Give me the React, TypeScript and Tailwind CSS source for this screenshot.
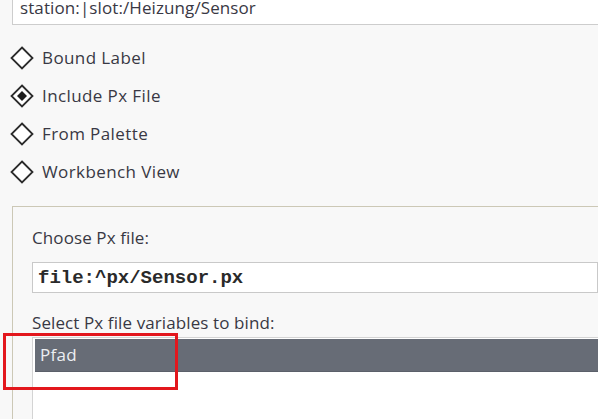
import React from 'react'

const options = [
  { label: 'Bound Label', checked: false },
  { label: 'Include Px File', checked: true },
  { label: 'From Palette', checked: false },
  { label: 'Workbench View', checked: false },
]

function Diamond({ checked }: { checked: boolean }) {
  return (
    <svg width="24" height="24" viewBox="0 0 24 24" className="shrink-0">
      <path d="M12 1.5 L22.5 12 L12 22.5 L1.5 12 Z" fill="#fff" stroke="#2b2b2b" strokeWidth="1.8" />
      {checked && <path d="M12 7 L17 12 L12 17 L7 12 Z" fill="#1e1e1e" />}
    </svg>
  )
}

export default function App() {
  return (
    <div
      className="relative w-[598px] h-[419px] overflow-hidden bg-[#f8f8f8] text-[#393844] font-medium"
      style={{ fontFamily: '"Open Sans", "Noto Sans", sans-serif' }}
    >
      {/* ── Ord field ── */}
      <div className="ml-[12px] h-[25px] bg-white border-l border-b border-[#cdcdcd] pl-[7px] flex items-start">
        <span className="text-[17px] leading-[20px] -mt-[2px] tracking-[0.1px]">station:|slot:/Heizung/Sensor</span>
      </div>

      {/* ── Type options ── */}
      <div className="mt-[14px] ml-[10px] flex flex-col">
        {options.map((o) => (
          <div key={o.label} className="h-[38px] flex items-center gap-[8px]">
            <Diamond checked={o.checked} />
            <span className="text-[17px] leading-[20px] tracking-[0.4px]">{o.label}</span>
          </div>
        ))}
      </div>

      {/* ── Px file group ── */}
      <div className="mt-[15px] ml-[12px] h-[300px] border-l border-t border-[#ccc8b6] pl-[19px] pt-[21px]">
        <div className="text-[17px] leading-[20px] tracking-[0.1px]">Choose Px file:</div>
        <div className="mt-[14px] h-[31px] bg-white border border-[#c9c9c9] pl-[5px] flex items-center">
          <span
            className="text-[19px] leading-[20px] font-bold text-[#2a2a2a]"
            style={{ fontFamily: '"Liberation Mono", "Courier New", monospace' }}
          >
            file:^px/Sensor.px
          </span>
        </div>
        <div className="mt-[20px] text-[17px] leading-[20px] tracking-[0.1px]">Select Px file variables to bind:</div>
        <div className="mt-[4px] h-[120px] bg-white border-l border-t border-[#d4d4d4] pt-[1px] pl-[2px]">
          <div className="h-[33px] bg-[#676c76] border-b border-[#5b606a] pl-[5px] flex items-center">
            <span className="text-[17px] leading-[20px] text-[#eceef2] tracking-[0.3px]">Pfad</span>
          </div>
        </div>
      </div>

      {/* ── Annotation ── */}
      <div className="absolute left-[3px] top-[333px] w-[175px] h-[57px] border-[3px] border-[#e3171d]" />
    </div>
  )
}
